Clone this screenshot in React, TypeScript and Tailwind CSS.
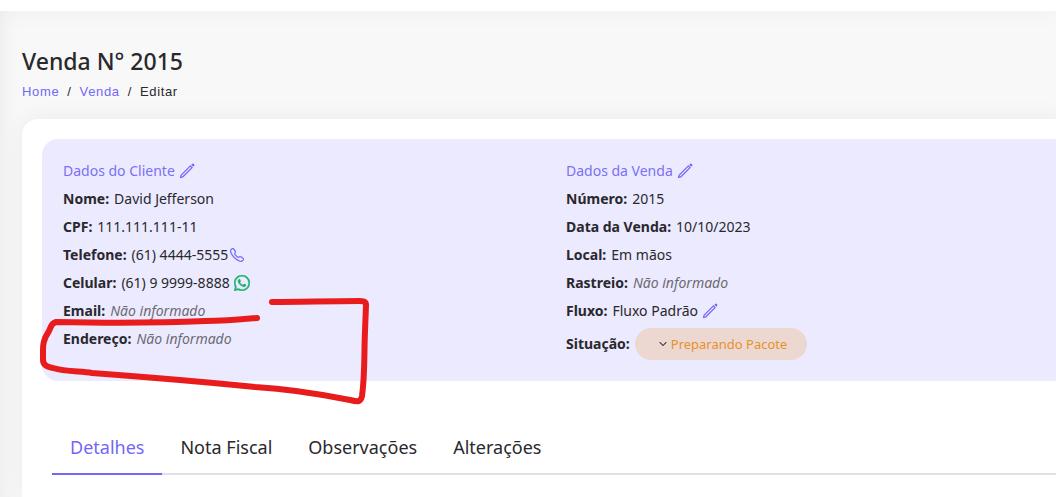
import { useState } from 'react'
import type { ReactNode } from 'react'
import { BsChevronDown, BsTelephone, BsWhatsapp } from 'react-icons/bs'

const tabs = ['Detalhes', 'Nota Fiscal', 'Observações', 'Alterações']

function Field({ label, children }: { label: string; children: ReactNode }) {
  return (
    <div className="flex h-7 items-center gap-[5px]">
      <dt className="font-bold">{label}:</dt>
      <dd className="flex items-center">{children}</dd>
    </div>
  )
}

function Empty() {
  return <em className="text-[#6c6a72]">Não informado</em>
}

function PencilIcon() {
  return (
    <svg
      aria-hidden="true"
      viewBox="0 0 16 16"
      fill="none"
      stroke="currentColor"
      strokeWidth="1.3"
      strokeLinecap="round"
      strokeLinejoin="round"
      className="size-4"
    >
      <path d="M11.4 2.9 2.2 12.1 1.5 14.5 3.9 13.8 13.1 4.6Z" />
      <path d="M13.1 1.7 13.5 1.4C14.1 .9 15.1 1.9 14.6 2.5L14.3 2.9Z" fill="currentColor" />
    </svg>
  )
}

function EditButton({ label }: { label: string }) {
  return (
    <button type="button" aria-label={label} className="ml-1 text-[#7367f7]">
      <PencilIcon />
    </button>
  )
}

function SectionTitle({ title }: { title: string }) {
  return (
    <h2 className="flex h-7 items-center text-[#7b6ff7]">
      {title}
      <EditButton label={`Editar ${title}`} />
    </h2>
  )
}

function Scribble() {
  return (
    <svg
      aria-hidden="true"
      width="340"
      height="120"
      viewBox="35 290 340 120"
      fill="none"
      stroke="#e81c1c"
      strokeWidth="6"
      strokeLinecap="round"
      strokeLinejoin="round"
      className="pointer-events-none absolute top-[151px] -left-[7px]"
    >
      <path d="M257 318C236 320 225 321 205 321C160 323 105 323 56 322C51 323 51 327 49 331C43 340 43 345 43 351V360C43 365 47 367 53 368C66 372 81 371 92 373C145 377 205 382 255 387C290 389 325 395 350 400C358 402 361 402 362 396C365 375 364 354 365 331L366 305C366 301 363 301 359 301C330 301 300 302 272 302" />
    </svg>
  )
}

export default function App() {
  const [activeTab, setActiveTab] = useState('Detalhes')

  return (
    <div className="min-h-screen overflow-x-clip bg-[#f8f8f8] font-['Noto_Sans',sans-serif] text-sm text-[#29282d] shadow-[inset_16px_0_16px_-12px_#ececec]">
      <header className="h-[11px] bg-white shadow-[0_0_24px_rgba(0,0,0,0.06)]" />
      <main className="-mr-[13px] pt-8 pl-[22px]">
        <h1 className="text-[23px] leading-9 font-medium">Venda N° 2015</h1>
        <nav
          aria-label="Navegação"
          className="flex h-[26px] items-center gap-2 font-['Liberation_Sans',sans-serif] text-[13px] tracking-wider"
        >
          <a href="#home" className="text-[#7367f7]">Home</a>
          <span>/</span>
          <a href="#venda" className="text-[#7367f7]">Venda</a>
          <span>/</span>
          <span aria-current="page">Editar</span>
        </nav>

        <div className="mt-3.5 rounded-tl-2xl bg-white pt-5 pb-[22px] pl-5 shadow-[0_0_24px_rgba(0,0,0,0.06)]">
          <section className="relative grid grid-cols-2 rounded-l-2xl bg-[#eceaff] pt-[18px] pb-[21px] pl-[21px]">
            <div>
              <SectionTitle title="Dados do Cliente" />
              <dl>
                <Field label="Nome">David Jefferson</Field>
                <Field label="CPF">111.111.111-11</Field>
                <Field label="Telefone">
                  (61) 4444-5555
                  <BsTelephone className="ml-0.5 size-3.5 stroke-[0.4] text-[#7367f7]" />
                </Field>
                <Field label="Celular">
                  (61) 9 9999-8888
                  <BsWhatsapp className="ml-1 size-4 stroke-[0.4] text-[#1cb06c]" />
                </Field>
                <Field label="Email"><Empty /></Field>
                <Field label="Endereço"><Empty /></Field>
              </dl>
            </div>
            <div>
              <SectionTitle title="Dados da Venda" />
              <dl>
                <Field label="Número">2015</Field>
                <Field label="Data da Venda">10/10/2023</Field>
                <Field label="Local">Em mãos</Field>
                <Field label="Rastreio"><Empty /></Field>
                <Field label="Fluxo">
                  Fluxo Padrão
                  <EditButton label="Editar Fluxo" />
                </Field>
                <div className="mt-[3px] flex h-8 items-center gap-[5px]">
                  <dt className="font-bold">Situação:</dt>
                  <dd>
                    <button
                      type="button"
                      aria-haspopup="menu"
                      className="flex h-8 items-center gap-1 rounded-full bg-[#ecd8d0] pr-5 pl-6 text-[13px] text-[#e8912d]"
                    >
                      <BsChevronDown className="size-2 stroke-1 text-[#29282d]" />
                      Preparando Pacote
                    </button>
                  </dd>
                </div>
              </dl>
            </div>
            <Scribble />
          </section>

          <div role="tablist" className="mt-10 ml-2.5 flex border-b-2 border-[#dee2e6] text-lg">
            {tabs.map((tab) => (
              <button
                key={tab}
                type="button"
                role="tab"
                aria-selected={tab === activeTab}
                onClick={() => setActiveTab(tab)}
                className={
                  tab === activeTab
                    ? '-mb-0.5 border-b-2 border-[#7367f7] px-[18px] pt-3 pb-3 text-[#7367f7]'
                    : '-mb-0.5 border-b-2 border-transparent px-[18px] pt-3 pb-3'
                }
              >
                {tab}
              </button>
            ))}
          </div>
        </div>
      </main>
    </div>
  )
}
